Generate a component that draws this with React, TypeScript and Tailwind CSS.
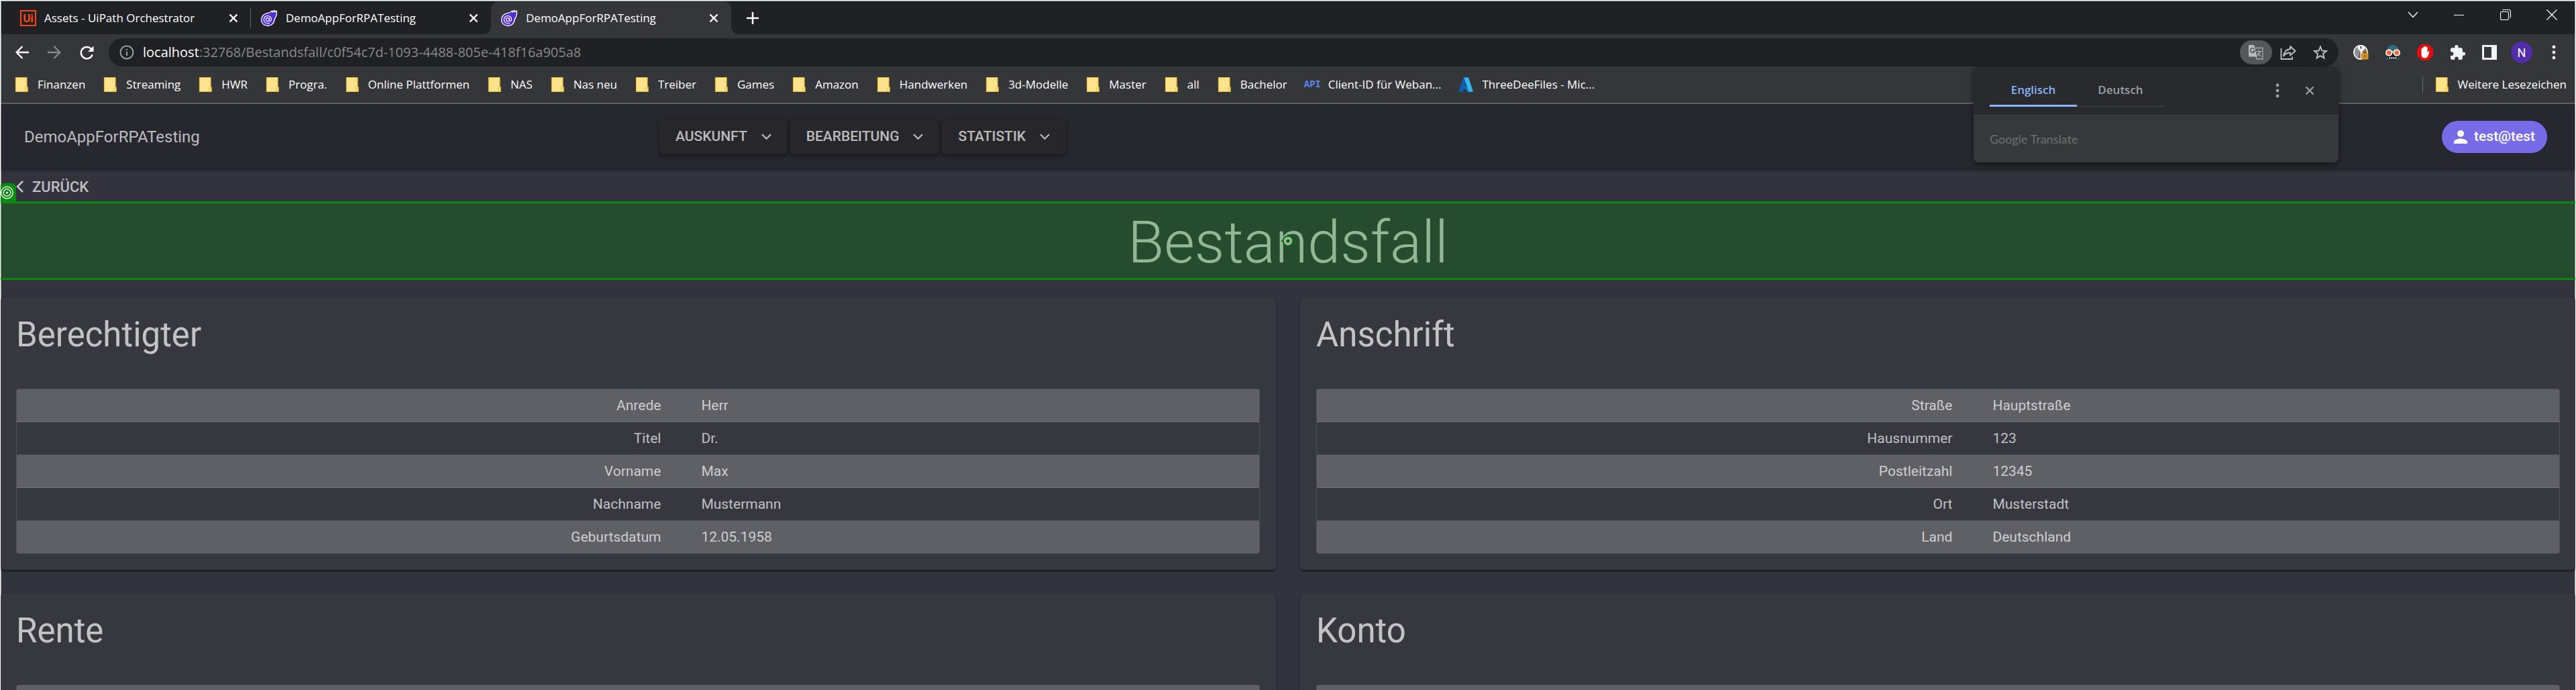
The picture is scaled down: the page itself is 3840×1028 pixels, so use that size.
import React from "react";

type IconProps = { className?: string };

const bookmarks = [
  "Finanzen",
  "Streaming",
  "HWR",
  "Progra.",
  "Online Plattformen",
  "NAS",
  "Nas neu",
  "Treiber",
  "Games",
  "Amazon",
  "Handwerken",
  "3d-Modelle",
  "Master",
  "all",
  "Bachelor",
];

function Cross({ className = "size-3.5" }: IconProps) {
  return (
    <svg viewBox="0 0 14 14" className={className} fill="none" stroke="currentColor" strokeWidth="2.4">
      <path d="M1.5 1.5 12.5 12.5M12.5 1.5 1.5 12.5" />
    </svg>
  );
}

function Dots() {
  return (
    <svg viewBox="0 0 6 22" className="h-[22px] w-[6px]" fill="currentColor">
      <circle cx="3" cy="3" r="2.4" />
      <circle cx="3" cy="11" r="2.4" />
      <circle cx="3" cy="19" r="2.4" />
    </svg>
  );
}

function BlazorLogo() {
  return (
    <svg viewBox="0 0 26 26" className="size-[26px] shrink-0">
      <path
        d="M24.4 2.2c.5 6-1 9.500-3.200 12.300-.2 6-4.600 10-10 10C5.600 24.500 1.500 20.500 1.500 15.300 1.500 10 5.800 6.500 10.500 5.600c3-.6 5.500-1.600 6.900-3.600l.5 2.300 3-3.100.1 2.700z"
        fill="#512bd4"
        stroke="#fff"
        strokeWidth="1.300"
        strokeLinejoin="round"
      />
      <circle cx="11" cy="15.300" r="2.500" fill="none" stroke="#fff" strokeWidth="1.200" />
      <path
        d="M13.500 12.800v3.400c0 1.800 3 1.600 3-.9 0-3.200-2.300-5.700-5.500-5.700s-5.700 2.500-5.700 5.700 2.500 5.700 5.700 5.700c1.200 0 2.200-.3 3-.8"
        fill="none"
        stroke="#fff"
        strokeWidth="1.200"
      />
    </svg>
  );
}

function Folder() {
  return (
    <svg viewBox="0 0 24 24" className="size-6 shrink-0">
      <path d="M3.500 1.500h16.500v14h1v7H3.500z" fill="#ffe38c" stroke="#e9bd3c" strokeWidth="1.200" />
      <path d="M18 22.500v-4.500q0-2 1.500-2H21v6.500z" fill="#ffe38c" stroke="#e9bd3c" strokeWidth="1" />
    </svg>
  );
}

function Tab({ title, icon, active, divider }: { title: string; icon: React.ReactNode; active?: boolean; divider?: boolean }) {
  return (
    <div
      className={
        active
          ? "relative flex w-[358px] items-center rounded-t-xl bg-[#35363a] pr-[19px] pl-3.5"
          : "relative flex w-[358px] items-center pr-[19px] pl-3.5"
      }
    >
      {active && (
        <>
          <span className="absolute bottom-0 -left-3 size-3 bg-[#35363a]">
            <span className="block size-3 rounded-br-xl bg-[#202124]" />
          </span>
          <span className="absolute -right-3 bottom-0 size-3 bg-[#35363a]">
            <span className="block size-3 rounded-bl-xl bg-[#202124]" />
          </span>
        </>
      )}
      <button type="button" className="flex flex-1 items-center gap-3 text-left">
        {icon}
        <span>{title}</span>
      </button>
      <button type="button" aria-label={"Tab schließen: " + title} className="text-white">
        <Cross />
      </button>
      {divider && <span className="absolute top-2.5 right-0 h-[30px] w-px bg-[#5f6368]" />}
    </div>
  );
}

function TabStrip() {
  return (
    <div className="flex h-[49px] bg-[#202124] pl-3.5 text-[17px] leading-6 text-white">
      <Tab
        title="Assets - UiPath Orchestrator"
        divider
        icon={
          <span className="flex size-6 items-center justify-center border-2 border-[#fa4616] font-['Roboto'] text-[17px] leading-5 font-bold text-[#fa4616]">
            Ui
          </span>
        }
      />
      <Tab title="DemoAppForRPATesting" icon={<BlazorLogo />} />
      <Tab title="DemoAppForRPATesting" icon={<BlazorLogo />} active />
      <button type="button" aria-label="Neuer Tab" className="ml-[23px]">
        <svg viewBox="0 0 18 18" className="size-[18px]" stroke="#fff" strokeWidth="2.500">
          <path d="M9 0v18M0 9h18" />
        </svg>
      </button>
      <div className="ml-auto flex h-10 text-white">
        <button type="button" aria-label="Tabs suchen" className="flex w-[69px] items-center justify-center">
          <svg viewBox="0 0 16 10" className="h-2.5 w-4" fill="none" stroke="currentColor" strokeWidth="1.200">
            <path d="M1 1l7 7.500L15 1" />
          </svg>
        </button>
        <button type="button" aria-label="Minimieren" className="flex w-[69px] items-center justify-center">
          <span className="h-px w-[15px] bg-white" />
        </button>
        <button type="button" aria-label="Wiederherstellen" className="flex w-[69px] items-center justify-center">
          <svg viewBox="0 0 16 16" className="size-4" fill="none" stroke="currentColor" strokeWidth="1.100">
            <rect x=".5" y="3.500" width="12" height="12" rx="2" />
            <path d="M3.500 1.200Q4 .5 5.500.5H12.500q3 0 3 3v7q0 1.500-1 2" />
          </svg>
        </button>
        <button type="button" aria-label="Schließen" className="flex w-[69px] items-center justify-center">
          <svg viewBox="0 0 16 16" className="size-4" stroke="currentColor" strokeWidth="1.200">
            <path d="M.5.5l15 15M15.500.5l-15 15" />
          </svg>
        </button>
      </div>
    </div>
  );
}

function TranslatePopup() {
  return (
    <div className="absolute top-full right-0 z-20 w-[544px] overflow-hidden rounded-lg bg-[#292a2d] shadow-[0_3px_8px_rgba(0,0,0,0.5)]">
      <div className="flex h-[73px] border-b border-[#404144] pl-6">
        <div role="tablist" className="mt-3 flex h-12 text-[17px] font-semibold">
          <button type="button" role="tab" aria-selected="true" className="w-[130px] border-b-3 border-[#8ab4f8] text-[#8ab4f8]">
            Englisch
          </button>
          <button type="button" role="tab" aria-selected="false" className="w-[130px] border-b border-[#47484b] pb-0.5 text-[#9aa0a6]">
            Deutsch
          </button>
        </div>
        <div className="ml-auto flex pr-[19px] text-[#9aa0a6]">
          <button type="button" aria-label="Optionen" className="flex w-12 items-center justify-center">
            <Dots />
          </button>
          <button type="button" aria-label="Übersetzung schließen" className="flex w-12 items-center justify-center">
            <Cross />
          </button>
        </div>
      </div>
      <div className="flex h-[70px] items-center bg-[#373839] pl-6 font-['Lato',sans-serif] text-[18px] text-[#6d7074]">Google Translate</div>
    </div>
  );
}

function Toolbar() {
  return (
    <div className="flex h-[54px] gap-[9px] bg-[#35363a] px-[7px] py-1.5">
      <div className="flex shrink-0 text-white">
        <button type="button" aria-label="Zurück" className="flex w-12 items-center justify-center">
          <svg viewBox="0 0 20 20" className="size-5" fill="none" stroke="currentColor" strokeWidth="2.300">
            <path d="M20 10H2M10.500 1L1.600 10l8.900 9" />
          </svg>
        </button>
        <button type="button" aria-label="Vorwärts" className="flex w-12 items-center justify-center text-[#87898c]">
          <svg viewBox="0 0 20 20" className="size-5" fill="none" stroke="currentColor" strokeWidth="2.300">
            <path d="M0 10h18M9.500 1l8.900 9-8.900 9" />
          </svg>
        </button>
        <button type="button" aria-label="Neu laden" className="flex w-12 items-center justify-center">
          <svg viewBox="0 0 21 21" className="size-[21px]" fill="none" stroke="currentColor" strokeWidth="2.500">
            <path d="M18.700 13.500A8.700 8.700 0 1 1 16.500 4.300L18 6" />
            <path d="M20.500.5v8.500H12z" fill="currentColor" stroke="none" />
          </svg>
        </button>
      </div>

      <div className="relative flex h-[42px] min-w-0 flex-1 items-center rounded-full bg-[#202124] pr-[3px] pl-4">
        <svg viewBox="0 0 22 22" className="size-[22px] shrink-0" fill="none" stroke="#9aa0a6" strokeWidth="2">
          <circle cx="11" cy="11" r="9.500" />
          <path d="M11 10v6M11 6v2" />
        </svg>
        <div className="ml-[13px] flex-1 text-[20px] leading-7 text-[#87898c]">
          <span className="text-white">localhost</span>:32768/Bestandsfall/c0f54c7d-1093-4488-805e-418f16a905a8
        </div>
        <button type="button" aria-label="Seite übersetzen" className="flex h-9 w-12 items-center justify-center rounded-full bg-[#56575a]">
          <svg viewBox="0 0 22 22" className="size-[22px]">
            <path d="M8.500 4.500H21V21H12z" fill="none" stroke="#a9aaac" strokeWidth="1.300" />
            <path d="M0 1.500Q0 0 1.500 0H8l4.500 17.500H1.500Q0 17.500 0 16z" fill="#b9babc" />
            <path d="M8.600 6.300A3.300 3.300 0 1 0 9 9.200H6" fill="none" stroke="#56575a" strokeWidth="1.500" />
            <path d="M11.500 9.500h7.500M15 8v1.500M17.500 9.500q-1 4-5 6.500M13 11.500q2 3.500 5.500 5.500" fill="none" stroke="#b9babc" strokeWidth="1.200" />
          </svg>
        </button>
        <button type="button" aria-label="Teilen" className="flex h-9 w-12 items-center justify-center">
          <svg viewBox="0 0 24 22" className="h-[22px] w-6" fill="none" stroke="#bdc1c6" strokeWidth="1.800">
            <path d="M1.500 5v16H18v-3.500" />
            <path d="M5 16.500C6 9.500 10 6.500 15 6V2l7.500 7L15 15.500v-4c-4.500 0-7.500 1.500-10 5z" strokeLinejoin="round" />
          </svg>
        </button>
        <button type="button" aria-label="Lesezeichen setzen" className="flex h-9 w-12 items-center justify-center">
          <svg viewBox="0 0 22 22" className="size-[22px]" fill="none" stroke="#bdc1c6" strokeWidth="1.900">
            <path d="M11 2.500l2.400 6 6.500.5-5 4.200 1.600 6.300L11 16.100l-5.500 3.400 1.600-6.300-5-4.200 6.500-.5z" />
          </svg>
        </button>
        <TranslatePopup />
      </div>

      <div className="flex shrink-0">
        <button type="button" aria-label="Passwortverwaltung" className="flex w-12 items-center justify-center">
          <svg viewBox="0 0 24 24" className="size-6">
            <circle cx="12" cy="12" r="10" fill="#5a5b5d" stroke="#fff" strokeWidth="1.800" />
            <path d="M4 7q3-4 7-4.500v5L9 21Q3 19 3 12z" fill="#8d8f92" />
            <path d="M8 2.500h3v4h2.500v-4H17l1.500 4.500-4 3.500V21l-3 1V10.500L8 7z" fill="#fff" />
            <path d="M15.500 14v-2a2.700 2.700 0 0 1 5.400 0v2" fill="none" stroke="#b87a1c" strokeWidth="1.700" />
            <rect x="12.500" y="13.500" width="11" height="9" rx="1" fill="#d8921f" />
            <circle cx="18" cy="17.500" r="1.200" fill="#6b4510" />
          </svg>
        </button>
        <button type="button" aria-label="Tarnmodus" className="flex w-12 items-center justify-center">
          <svg viewBox="0 0 24 24" className="size-6">
            <path d="M3 12Q3 1 12 1t9 11z" fill="#2f6d7e" />
            <path d="M3 12h18v8l-2 3H5l-2-3z" fill="#15171a" />
            <path d="M3 18v5h3zM21 18v5h-3z" fill="#2f6d7e" />
            <circle cx="6.200" cy="12.500" r="4.300" fill="#f0643c" stroke="#fdeee6" strokeWidth="1.900" />
            <circle cx="17.800" cy="12.500" r="4.300" fill="#f0643c" stroke="#fdeee6" strokeWidth="1.900" />
            <path d="M10 11.500h4" stroke="#fdeee6" strokeWidth="1.900" />
            <path d="M7.500 19v3M10.500 19v3M13.500 19v3M16.500 19v3" stroke="#d5eef2" strokeWidth="1.600" />
          </svg>
        </button>
        <button type="button" aria-label="Werbeblocker" className="flex w-12 items-center justify-center">
          <svg viewBox="0 0 24 24" className="size-6">
            <path d="M7 0h10l7 7v10l-7 7H7l-7-7V7z" fill="#e30b0b" />
            <path
              d="M6.500 12.500V7.200a1.100 1.100 0 0 1 2.200 0V5a1.100 1.100 0 0 1 2.300 0V4a1.100 1.100 0 0 1 2.300 0v1.200a1.100 1.100 0 0 1 2.300 0v7.300l1.200-1.700q1-1 1.900 0l-2.500 6.700q-1.200 3-4.200 3-5.500 0-5.500-5.500z"
              fill="#fff"
            />
          </svg>
        </button>
        <button type="button" aria-label="Erweiterungen" className="flex w-12 items-center justify-center">
          <svg viewBox="1 0 22 22" className="size-[23px]" fill="#f1f3f4">
            <path d="M20.500 10H19V6a2 2 0 0 0-2-2h-4V2.500a2.500 2.500 0 0 0-5 0V4H4a2 2 0 0 0-1.990 2v3.800H3.500a2.700 2.700 0 0 1 0 5.400H2V19a2 2 0 0 0 2 2h3.800v-1.500a2.700 2.700 0 0 1 5.400 0V21H17a2 2 0 0 0 2-2v-4h1.500a2.500 2.500 0 0 0 0-5z" />
          </svg>
        </button>
        <button type="button" aria-label="Seitenleiste" className="flex w-12 items-center justify-center">
          <svg viewBox="0 0 22 22" className="size-[22px]">
            <path d="M0 0h22v22H0zM3 3v16h11V3z" fill="#f1f3f4" fillRule="evenodd" />
          </svg>
        </button>
        <button type="button" aria-label="Profil" className="flex w-12 items-center justify-center">
          <span className="flex size-8 items-center justify-center rounded-full bg-[#512da8] font-['Roboto'] text-[18px] text-white">N</span>
        </button>
        <button type="button" aria-label="Menü" className="flex w-12 items-center justify-center text-[#f1f3f4]">
          <Dots />
        </button>
      </div>
    </div>
  );
}

function BookmarkBar() {
  const item = "flex items-center gap-3 whitespace-nowrap";
  return (
    <nav
      aria-label="Lesezeichen"
      className="flex h-[50px] justify-between border-b-2 border-[#5f6163] bg-[#35363a] pr-3 pb-1.5 pl-[18px] text-[17px] leading-6 text-white"
    >
      <div className="flex gap-[25px]">
        {bookmarks.map((name) => (
          <a key={name} href="#" className={item}>
            <Folder />
            {name}
          </a>
        ))}
        <a href="#" className={item}>
          <span className="w-6 font-['Liberation_Mono',monospace] text-[14px] font-bold text-[#5b84e8]">API</span>
          Client-ID für Weban...
        </a>
        <a href="#" className={item}>
          <svg viewBox="0 0 24 24" className="size-6">
            <path d="M8.500 1.500h7L8.500 22q-.3.800-1 .8H2.500q-1.500 0-1-1.500z" fill="#0f5fae" />
            <path d="M7 14.500h10l3 8.300H15z" fill="#0a6fc7" />
            <path d="M8.800 1.500h6.400q.8 0 1.100.8l6.400 19q.4 1.500-1 1.500H15q1.200-.3.900-1.500L9.700 2.300z" fill="#36b7ee" />
          </svg>
          ThreeDeeFiles - Mic...
        </a>
      </div>
      <div className="flex items-center gap-4">
        <span className="h-6 w-px bg-[#6b6d70]" />
        <a href="#" className={item}>
          <Folder />
          Weitere Lesezeichen
        </a>
      </div>
    </nav>
  );
}

function MenuButton({ label }: { label: string }) {
  return (
    <button
      type="button"
      aria-haspopup="menu"
      className="flex h-[52px] items-center gap-[21px] rounded-md bg-[#27272b] px-6 text-[21px] font-medium uppercase shadow-[0_3px_4px_rgba(0,0,0,0.3),0_1px_6px_rgba(0,0,0,0.2)]"
    >
      {label}
      <svg viewBox="0 0 15 10" className="h-2.5 w-[15px]" fill="none" stroke="currentColor" strokeWidth="2.200">
        <path d="M1 1.200l6.500 6.500L14 1.200" />
      </svg>
    </button>
  );
}

function AppHeader() {
  return (
    <header className="relative flex h-[97px] items-center bg-[#27272f] pr-[41px] pl-8 shadow-[0_2px_4px_rgba(0,0,0,0.35)]">
      <div className="w-[949px] shrink-0 pl-0.5 text-[24px]">DemoAppForRPATesting</div>
      <nav className="flex gap-1">
        <MenuButton label="Auskunft" />
        <MenuButton label="Bearbeitung" />
        <MenuButton label="Statistik" />
      </nav>
      <button type="button" className="ml-auto flex h-12 items-center gap-2.5 rounded-full bg-[#776be7] px-[18px] text-[21px] font-medium text-white">
        <svg viewBox="0 0 20 20" className="size-5" fill="currentColor">
          <circle cx="10" cy="5" r="5" />
          <path d="M0 20v-2.500c0-3.500 6.500-5 10-5s10 1.500 10 5V20z" />
        </svg>
        test@test
      </button>
    </header>
  );
}

function SelectedTitle() {
  return (
    <div className="relative -mx-0.5 h-[117px] border-y-3 border-[#068b0c]">
      <h1 className="pt-1 text-center text-[88px] leading-[107px] font-light">Bestandsfall</h1>
      <span className="absolute inset-0 bg-[#009900]/25" />
      <span className="absolute bottom-full left-0 flex h-[30px] w-6 items-start rounded-t-md bg-[#068b0c] pt-1">
        <svg viewBox="0 0 20 20" className="size-5" fill="none" stroke="#fff" strokeWidth="1.400">
          <circle cx="10.500" cy="10" r="8.700" />
          <circle cx="10.500" cy="10" r="5.200" />
          <circle cx="10.500" cy="10" r="1.600" fill="#fff" stroke="none" />
        </svg>
      </span>
      <svg viewBox="0 0 20 20" className="absolute top-1/2 left-1/2 size-5 -translate-1/2" fill="none">
        <circle cx="10" cy="10" r="7.300" fill="#a9b0a9" stroke="#066b0a" strokeWidth="2" />
        <circle cx="10" cy="10" r="2.600" fill="#066b0a" />
        <path d="M10 0v2M10 18v2M0 10h2M18 10h2" stroke="#066b0a" strokeWidth="2" />
      </svg>
    </div>
  );
}

function DataCard({ title, rows, wide }: { title: string; rows: [string, string][]; wide?: boolean }) {
  return (
    <section className="rounded-md bg-[#373740] px-6 pb-6 shadow-[0_3px_2px_-1px_rgba(0,0,0,0.3),0_2px_2px_rgba(0,0,0,0.2),0_2px_5px_rgba(0,0,0,0.12)]">
      <h2 className="mb-[25px] text-[51px] leading-[110px]">{title}</h2>
      <div className="overflow-hidden rounded-sm border border-white/12">
        <table className="w-full table-fixed text-[21px] leading-[30px]">
          <tbody>
            {rows.map(([label, value], i) => (
              <tr key={i} className="border-b border-white/12 odd:bg-white/20 last:border-b-0">
                <th scope="row" className={wide ? "w-[53.8%] py-[9px] pr-9 pl-6 text-right font-normal" : "w-[53.1%] py-[9px] pr-9 pl-6 text-right font-normal"}>
                  {label}
                </th>
                <td className="py-[9px] pr-9 pl-6">{value}</td>
              </tr>
            ))}
          </tbody>
        </table>
      </div>
    </section>
  );
}

const blank: [string, string][] = [["\u00a0", "\u00a0"]];

export default function App() {
  return (
    <div className="h-screen overflow-hidden border border-b-0 border-white bg-[#32333d] font-['Open_Sans',sans-serif]">
      <div className="border border-b-0 border-[#8f9996]">
        <TabStrip />
        <Toolbar />
        <BookmarkBar />
        <div className="font-['Roboto',sans-serif] text-white/70">
          <AppHeader />
          <main>
            <button type="button" className="flex h-12 items-center gap-[13px] pt-1 pl-[22px] text-[22px] font-medium uppercase">
              <svg viewBox="0 0 11 18" className="h-[18px] w-[11px]" fill="none" stroke="currentColor" strokeWidth="2.600">
                <path d="M10 1L2 9l8 8" />
              </svg>
              Zurück
            </button>
            <SelectedTitle />
            <div className="-mx-0.5 grid grid-cols-2 gap-9 pt-[27px]">
              <DataCard
                title="Berechtigter"
                wide
                rows={[
                  ["Anrede", "Herr"],
                  ["Titel", "Dr."],
                  ["Vorname", "Max"],
                  ["Nachname", "Mustermann"],
                  ["Geburtsdatum", "12.05.1958"],
                ]}
              />
              <DataCard
                title="Anschrift"
                rows={[
                  ["Straße", "Hauptstraße"],
                  ["Hausnummer", "123"],
                  ["Postleitzahl", "12345"],
                  ["Ort", "Musterstadt"],
                  ["Land", "Deutschland"],
                ]}
              />
              <DataCard title="Rente" rows={blank} wide />
              <DataCard title="Konto" rows={blank} />
            </div>
          </main>
        </div>
      </div>
    </div>
  );
}
